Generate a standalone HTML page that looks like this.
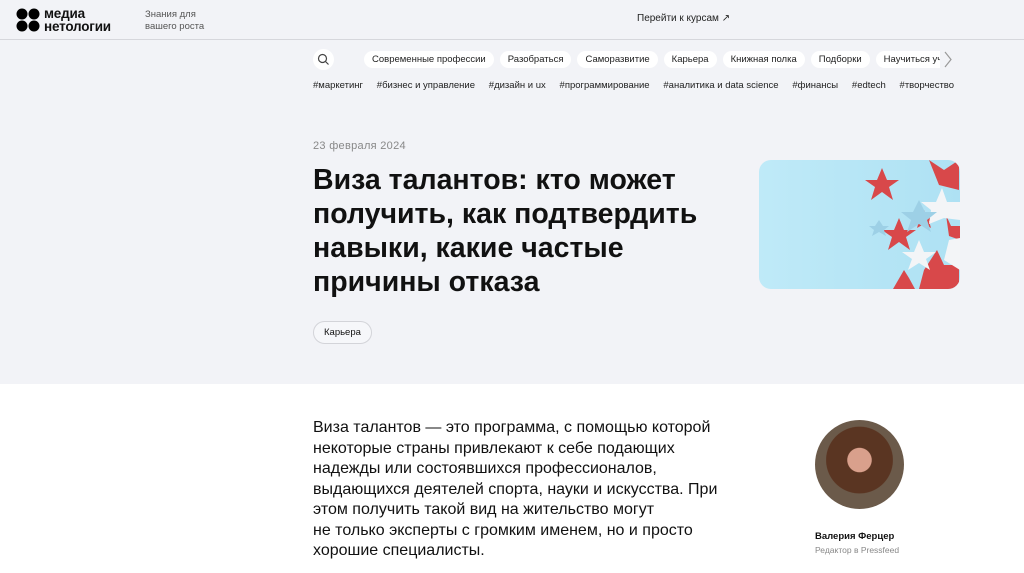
<!DOCTYPE html>
<html><head><meta charset="utf-8"><style>
*{box-sizing:border-box;margin:0;padding:0}
body{width:1024px;height:573px;overflow:hidden;font-family:"Liberation Sans",sans-serif;background:#fff;color:#111}
.top{position:absolute;left:0;top:0;width:1024px;height:384px;background:#f2f3f7}
.hdr{position:absolute;left:0;top:0;width:1024px;height:40px;border-bottom:1px solid #d6d7dc}
.logo{position:absolute;left:16px;top:8px}
.lt{position:absolute;left:44px;top:7px;font-size:13.5px;font-weight:bold;line-height:13px;letter-spacing:-.2px}
.tag{position:absolute;left:145px;top:9px;font-size:9.5px;color:#555;line-height:12px}
.go{position:absolute;left:637px;top:13px;font-size:10px;color:#222}
.srch{position:absolute;left:313px;top:49px;width:21px;height:21px;border-radius:50%;background:#fff}
.chips{position:absolute;left:364px;top:51px;display:flex;gap:6px;width:576px;overflow:hidden;white-space:nowrap}
.chip{background:#fff;border-radius:9px;padding:3px 8px;font-size:9.5px;color:#222;height:17px;line-height:11px}
.tags{position:absolute;left:313px;top:80px;font-size:9.5px;color:#222;white-space:nowrap}
.tags span{margin-right:13.8px}
.date{position:absolute;left:313px;top:140px;font-size:11px;color:#888;letter-spacing:.3px}
h1{position:absolute;left:313px;top:163px;font-size:28.5px;line-height:34px;font-weight:bold;width:440px;letter-spacing:0;white-space:nowrap}
.kar{position:absolute;left:313px;top:321px;border:1px solid #d3d4d9;border-radius:12px;padding:5px 10px;font-size:9.5px;background:#f6f7fa}
.img{position:absolute;left:759px;top:160px;width:201px;height:129px;border-radius:12px;overflow:hidden;background:linear-gradient(90deg,#bfeaf8,#aee1f3)}
.body{position:absolute;left:313px;top:418px;font-size:16px;line-height:20.5px;color:#111;white-space:nowrap}
.ava{position:absolute;left:815px;top:420px;width:89px;height:89px;border-radius:50%;background:radial-gradient(circle at 50% 45%,#d9a08c 0 18%,#5a3522 19% 50%,#6b5a4a 51%)}
.an{position:absolute;left:815px;top:531px;font-size:9.5px;font-weight:bold}
.ar{position:absolute;left:815px;top:545px;font-size:8.5px;color:#888}
</style></head><body>
<div class="top">
<div class="hdr">
<svg class="logo" width="24" height="24" viewBox="0 0 24 24"><circle cx="6" cy="6" r="5.5"/><circle cx="18" cy="6" r="5.5"/><circle cx="6" cy="18" r="5.5"/><circle cx="18" cy="18" r="5.5"/></svg>
<div class="lt">медиа<br>нетологии</div>
<div class="tag">Знания для<br>вашего роста</div>
<div class="go">Перейти к курсам ↗</div>
</div>
<div class="srch"><svg width="21" height="21" viewBox="0 0 21 21"><circle cx="9.5" cy="9.5" r="4" fill="none" stroke="#444" stroke-width="1.2"/><path d="M12.5 12.5L15.5 15.5" stroke="#444" stroke-width="1.2"/></svg></div>
<div class="chips"><span class="chip">Современные профессии</span><span class="chip">Разобраться</span><span class="chip">Саморазвитие</span><span class="chip">Карьера</span><span class="chip">Книжная полка</span><span class="chip">Подборки</span><span class="chip">Научиться учиться</span></div>
<svg style="position:absolute;left:943px;top:51px" width="10" height="17" viewBox="0 0 10 17"><path d="M2 1L8 8.5L2 16" fill="none" stroke="#999" stroke-width="1.2"/></svg>
<div class="tags"><span>#маркетинг</span><span>#бизнес и управление</span><span>#дизайн и ux</span><span>#программирование</span><span>#аналитика и data science</span><span>#финансы</span><span>#edtech</span><span>#творчество</span></div>
<div class="date">23 февраля 2024</div>
<h1>Виза талантов: кто может<br>получить, как подтвердить<br>навыки, какие частые<br>причины отказа</h1>
<div class="kar">Карьера</div>
<div class="img"><svg width="201" height="129" viewBox="0 0 201 129">
<g fill="#d8484a"><polygon points="170,0 185,10 200,0 200,30 180,25"/><polygon points="123,8 128,20 140,20 130,27 134,40 123,32 112,40 116,27 106,20 118,20"/><polygon points="140,58 145,70 157,70 147,77 151,90 140,82 129,90 133,77 123,70 135,70"/><polygon points="178,90 185,105 200,105 200,129 160,129 165,110"/><polygon points="187,55 192,66 201,66 201,80 190,76"/><polygon points="165,50 168,57 175,57 170,61 172,68 165,64 158,68 160,61 155,57 162,57"/><polygon points="145,110 150,118 156,129 134,129"/></g>
<g fill="#f3f5f7"><polygon points="183,28 188,42 201,42 201,60 185,58 170,64 172,50 162,42 177,42"/><polygon points="160,80 165,92 177,92 167,99 171,110 160,103 149,110 153,99 143,92 155,92"/><polygon points="190,80 201,78 201,110 185,100"/></g>
<g fill="#9dd0e6"><polygon points="160,40 166,52 178,52 168,60 172,72 160,64 148,72 152,60 142,52 154,52"/><polygon points="120,60 124,66 130,66 125,70 127,76 120,72 113,76 115,70 110,66 116,66"/></g>
</svg></div>
</div>
<div class="body">Виза талантов — это программа, с помощью которой<br>некоторые страны привлекают к себе подающих<br>надежды или состоявшихся профессионалов,<br>выдающихся деятелей спорта, науки и искусства. При<br>этом получить такой вид на жительство могут<br>не только эксперты с громким именем, но и просто<br>хорошие специалисты.</div>
<div class="ava"></div>
<div class="an">Валерия Ферцер</div>
<div class="ar">Редактор в Pressfeed</div>
</body></html>
